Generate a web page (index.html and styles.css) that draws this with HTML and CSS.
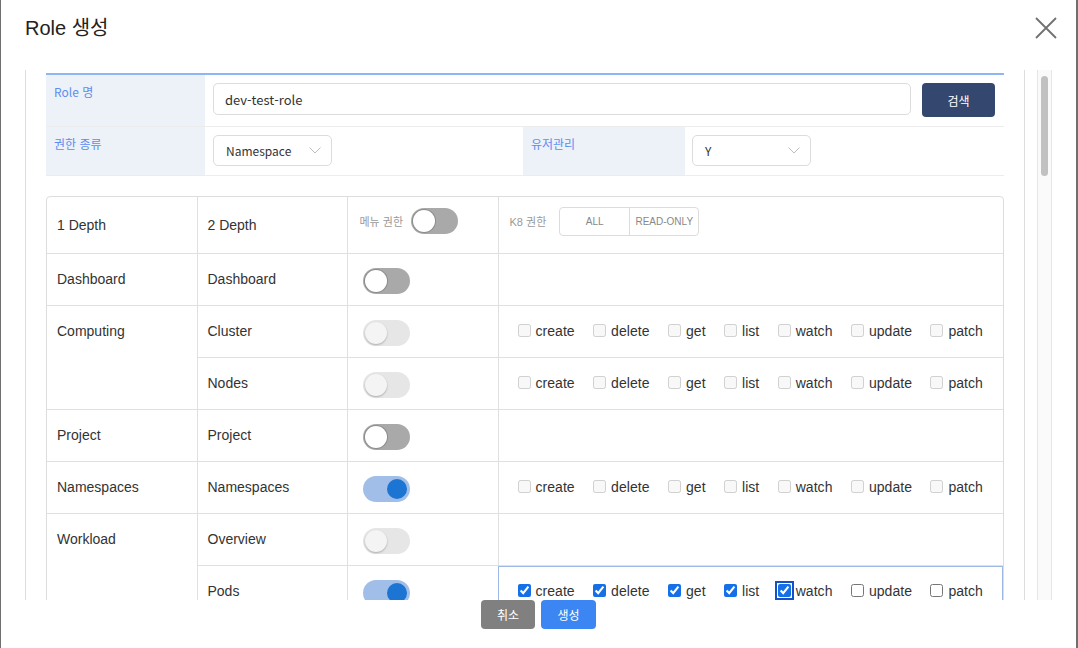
FILE: index.html
```html
<!DOCTYPE html>
<html lang="ko">
<head>
<meta charset="utf-8">
<title>Role 생성</title>
<link rel="stylesheet" href="styles.css">
</head>
<body>
<div class="dialog">
  <header class="dialog-header">
    <h1 class="dialog-title">Role 생성</h1>
    <button class="close-btn" aria-label="닫기">
      <svg width="22" height="22" viewBox="0 0 22 22"><path d="M1 1L21 21M21 1L1 21" stroke="#707070" stroke-width="1.8" fill="none"/></svg>
    </button>
  </header>

  <div class="dialog-body">
    <div class="scroll-content">
      <div class="form">
        <div class="form-row row-1">
          <div class="form-label">Role 명</div>
          <div class="form-value value-name">
            <input class="text-input" type="text" value="dev-test-role">
            <button class="search-btn">검색</button>
          </div>
        </div>
        <div class="form-row row-2">
          <div class="form-label">권한 종류</div>
          <div class="form-value value-type">
            <div class="select"><span>Namespace</span><svg width="12" height="7" viewBox="0 0 12 7"><path d="M0.5 0.5L6 6L11.5 0.5" stroke="#bdbdbd" stroke-width="1" fill="none"/></svg></div>
          </div>
          <div class="form-label label-user">유저관리</div>
          <div class="form-value value-user">
            <div class="select"><span>Y</span><svg width="12" height="7" viewBox="0 0 12 7"><path d="M0.5 0.5L6 6L11.5 0.5" stroke="#bdbdbd" stroke-width="1" fill="none"/></svg></div>
          </div>
        </div>
      </div>

      <div class="perm-wrap">
        <table class="perm-table">
          <colgroup><col class="c1"><col class="c2"><col class="c3"><col class="c4"></colgroup>
          <tr class="head">
            <td><div class="cell">1 Depth</div></td>
            <td><div class="cell">2 Depth</div></td>
            <td><div class="cell cell-menu-head"><span class="mini-label">메뉴 권한</span><span class="toggle toggle-off"></span></div></td>
            <td><div class="cell cell-k8-head"><span class="mini-label">K8 권한</span>
              <div class="segmented"><span class="seg">ALL</span><span class="seg">READ-ONLY</span></div></div></td>
          </tr>
          <tr>
            <td><div class="cell">Dashboard</div></td>
            <td><div class="cell">Dashboard</div></td>
            <td><div class="cell cell-toggle"><span class="toggle toggle-off"></span></div></td>
            <td><div class="cell"></div></td>
          </tr>
          <tr>
            <td rowspan="2"><div class="cell">Computing</div></td>
            <td><div class="cell">Cluster</div></td>
            <td><div class="cell cell-toggle"><span class="toggle toggle-disabled"></span></div></td>
            <td><div class="cell perms">
              <label class="perm"><input type="checkbox" disabled>create</label>
              <label class="perm"><input type="checkbox" disabled>delete</label>
              <label class="perm"><input type="checkbox" disabled>get</label>
              <label class="perm"><input type="checkbox" disabled>list</label>
              <label class="perm"><input type="checkbox" disabled>watch</label>
              <label class="perm"><input type="checkbox" disabled>update</label>
              <label class="perm"><input type="checkbox" disabled>patch</label>
            </div></td>
          </tr>
          <tr>
            <td><div class="cell">Nodes</div></td>
            <td><div class="cell cell-toggle"><span class="toggle toggle-disabled"></span></div></td>
            <td><div class="cell perms">
              <label class="perm"><input type="checkbox" disabled>create</label>
              <label class="perm"><input type="checkbox" disabled>delete</label>
              <label class="perm"><input type="checkbox" disabled>get</label>
              <label class="perm"><input type="checkbox" disabled>list</label>
              <label class="perm"><input type="checkbox" disabled>watch</label>
              <label class="perm"><input type="checkbox" disabled>update</label>
              <label class="perm"><input type="checkbox" disabled>patch</label>
            </div></td>
          </tr>
          <tr>
            <td><div class="cell">Project</div></td>
            <td><div class="cell">Project</div></td>
            <td><div class="cell cell-toggle"><span class="toggle toggle-off"></span></div></td>
            <td><div class="cell"></div></td>
          </tr>
          <tr>
            <td><div class="cell">Namespaces</div></td>
            <td><div class="cell">Namespaces</div></td>
            <td><div class="cell cell-toggle"><span class="toggle toggle-on"></span></div></td>
            <td><div class="cell perms">
              <label class="perm"><input type="checkbox" disabled>create</label>
              <label class="perm"><input type="checkbox" disabled>delete</label>
              <label class="perm"><input type="checkbox" disabled>get</label>
              <label class="perm"><input type="checkbox" disabled>list</label>
              <label class="perm"><input type="checkbox" disabled>watch</label>
              <label class="perm"><input type="checkbox" disabled>update</label>
              <label class="perm"><input type="checkbox" disabled>patch</label>
            </div></td>
          </tr>
          <tr>
            <td rowspan="2"><div class="cell">Workload</div></td>
            <td><div class="cell">Overview</div></td>
            <td><div class="cell cell-toggle"><span class="toggle toggle-disabled"></span></div></td>
            <td><div class="cell"></div></td>
          </tr>
          <tr>
            <td><div class="cell">Pods</div></td>
            <td><div class="cell cell-toggle"><span class="toggle toggle-on"></span></div></td>
            <td class="active-cell"><div class="cell perms">
              <label class="perm"><input type="checkbox" checked>create</label>
              <label class="perm"><input type="checkbox" checked>delete</label>
              <label class="perm"><input type="checkbox" checked>get</label>
              <label class="perm"><input type="checkbox" checked>list</label>
              <label class="perm"><input type="checkbox" class="focused" checked>watch</label>
              <label class="perm"><input type="checkbox">update</label>
              <label class="perm"><input type="checkbox">patch</label>
            </div></td>
          </tr>
        </table>
      </div>
    </div>
    <div class="scrollbar"><div class="scrollbar-thumb"></div></div>
  </div>

  <footer class="dialog-footer">
    <button class="btn btn-cancel">취소</button>
    <button class="btn btn-create">생성</button>
  </footer>
</div>
</body>
</html>
```

FILE: styles.css
```css
* { box-sizing: border-box; }
html, body { margin: 0; height: 100%; }
body {
  background: #6f6f6f;
  font-family: "Liberation Sans", "Noto Sans CJK KR", sans-serif;
  color: #333;
  overflow: hidden;
}

.dialog {
  margin-left: 1px;
  width: 1075px;
  height: 648px;
  background: #fff;
  display: flex;
  flex-direction: column;
}

.dialog-header {
  height: 70px;
  flex: none;
  display: flex;
  justify-content: space-between;
  align-items: flex-start;
  padding: 16px 19px 0 24px;
}
.dialog-title {
  margin: 0;
  font-size: 20px;
  line-height: 24px;
  font-weight: 400;
  color: #222;
}
.close-btn {
  border: 0;
  background: none;
  padding: 0;
  margin-top: 1px;
  width: 22px;
  height: 22px;
}
.close-btn svg { display: block; }

.dialog-body {
  height: 530px;
  flex: none;
  display: flex;
  gap: 12px;
  padding-left: 24px;
}
.scroll-content {
  width: 1000px;
  height: 100%;
  border-left: 1px solid #ddd;
  border-right: 1px solid #ddd;
  padding: 3px 20px 0;
  overflow: hidden;
}
.scrollbar {
  width: 15px;
  height: 100%;
  background: #fafafa;
  border-left: 1px solid #e6e6e6;
  border-right: 1px solid #e6e6e6;
  padding: 6px 3px;
}
.scrollbar-thumb {
  height: 100px;
  background: #c1c1c1;
  border-radius: 4px;
}

.dialog-footer {
  flex: none;
  display: flex;
  justify-content: center;
  gap: 6px;
}
.btn {
  height: 29px;
  border: 0;
  border-radius: 4px;
  color: #fff;
  font: 12px "Noto Sans CJK KR", sans-serif;
  padding: 0;
}
.btn-cancel { width: 54px; background: #808080; }
.btn-create { width: 55px; background: #3b86f2; }

/* form */
.form {
  border-top: 2px solid #8cb6f4;
  font-family: "Noto Sans CJK KR", "Noto Sans", sans-serif;
}
.form-row {
  display: flex;
  border-bottom: 1px solid #ececec;
}
.row-1 { height: 52px; }
.row-2 { height: 49px; }
.form-label {
  width: 159px;
  flex: none;
  background: #edf1f8;
  color: #5c8ef0;
  font-size: 12px;
  line-height: 18px;
  padding: 8px;
}
.label-user { width: 162px; }
.form-value {
  display: flex;
  align-items: flex-start;
}
.value-name { flex: 1; padding: 8px 9px 0 8px; }
.text-input {
  flex: 1;
  height: 32px;
  border: 1px solid #dcdcdc;
  border-radius: 5px;
  padding: 0 11px;
  font: 13px "Noto Sans CJK KR", sans-serif;
  color: #333;
}
.search-btn {
  width: 73px;
  height: 34px;
  margin-left: 11px;
  background: #34476f;
  color: #fff;
  border: 0;
  border-radius: 4px;
  font: 12px "Noto Sans CJK KR", sans-serif;
}
.value-type { width: 318px; padding: 8px; }
.value-user { flex: 1; padding: 8px 7px; }
.select {
  width: 119px;
  height: 31px;
  border: 1px solid #dcdcdc;
  border-radius: 5px;
  display: flex;
  align-items: center;
  justify-content: space-between;
  padding: 0 10px 0 12px;
  font-size: 12px;
  color: #333;
}
.select svg { display: block; }

/* permission table */
.perm-wrap {
  margin-top: 20px;
  border: 1px solid #ddd;
  border-radius: 4px 4px 0 0;
  overflow: hidden;
}
.perm-table {
  width: 100%;
  border-collapse: collapse;
  border-style: hidden;
  table-layout: fixed;
  font-size: 14px;
  color: #333;
}
.c1 { width: 150px; }
.c2 { width: 150px; }
.c3 { width: 151px; }
.perm-table td {
  border: 1px solid #e0e0e0;
  padding: 0;
  vertical-align: top;
}
.cell {
  height: 51px;
  display: flex;
  align-items: center;
  padding: 0 10px 2px;
  white-space: nowrap;
}
.head .cell { height: 56px; padding-bottom: 0; }
.head .cell-menu-head,
.head .cell-k8-head { padding-bottom: 8px; }
.cell-menu-head { padding-left: 12px; gap: 8px; }
.cell-k8-head { padding-left: 11px; gap: 13px; }
.cell-toggle { padding-left: 15px; padding-top: 2px; padding-bottom: 0; }

.mini-label {
  font-size: 11px;
  color: #999;
}
.segmented {
  display: flex;
  height: 29px;
  border: 1px solid #dcdcdc;
  border-radius: 4px;
}
.seg {
  width: 69px;
  display: flex;
  align-items: center;
  justify-content: center;
  font-size: 10px;
  color: #888;
}
.seg + .seg { border-left: 1px solid #dcdcdc; }

.toggle {
  width: 47px;
  height: 26px;
  border-radius: 13px;
  position: relative;
  flex: none;
}
.toggle::after {
  content: "";
  position: absolute;
  top: 2px;
  left: 2px;
  width: 22px;
  height: 22px;
  border-radius: 50%;
}
.toggle-off { background: #a9a9a9; }
.toggle-off::after { background: #fff; box-shadow: 0 0 0 1px #8c8c8c; }
.toggle-disabled { background: #e6e6e6; }
.toggle-disabled::after { background: #f4f4f4; box-shadow: 0 1px 2px rgba(0, 0, 0, 0.25); }
.toggle-on { background: #a1bee9; }
.toggle-on::after { left: auto; right: 3px; top: 3px; width: 20px; height: 20px; background: #1c74d3; }

.perms { padding-left: 19px; gap: 18.4px; }
.perm {
  display: flex;
  align-items: center;
  gap: 5px;
  color: #333;
  letter-spacing: 0.05px;
}
.perm input {
  margin: 0;
  width: 13px;
  height: 13px;
  accent-color: #1570e8;
}
.perm input.focused {
  outline: 2px solid #1450c8;
  outline-offset: 1px;
}
.active-cell {
  outline: 1px solid #9fb9e6;
  outline-offset: -1px;
}
```
